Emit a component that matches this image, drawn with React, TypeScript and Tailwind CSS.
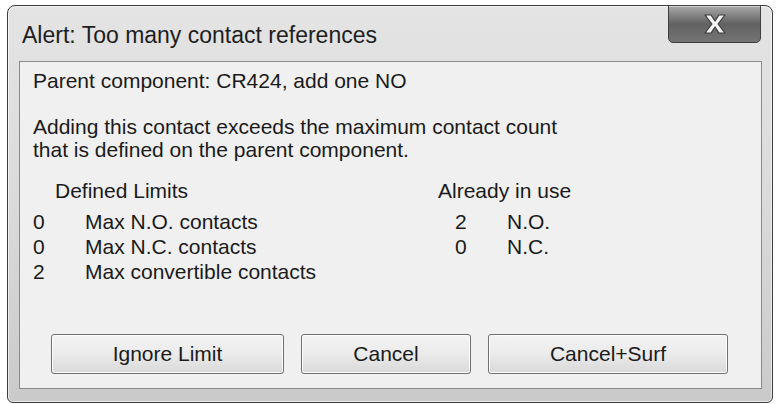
import React from "react";

const font = { fontFamily: '"Liberation Sans", Arial, sans-serif' };

function CloseButton() {
  return (
    <div className="absolute top-[-1px] right-[11px] w-[93px] h-[38px] rounded-b-[5px] border border-[#3e3e3e] bg-gradient-to-b from-[#a9a9a9] via-[#626262] to-[#747474] shadow-[inset_0_1px_0_rgba(255,255,255,0.5)] flex items-center justify-center">
      <svg width="26" height="22" viewBox="0 0 26 22">
        <path
          d="M3 2 L9 2 L13 8 L17 2 L23 2 L16 11 L23 20 L17 20 L13 14 L9 20 L3 20 L10 11 Z"
          fill="#f4f4f4"
          stroke="#3a3a3a"
          strokeWidth="1.2"
          strokeLinejoin="round"
        />
      </svg>
    </div>
  );
}

function DialogButton({ label, width }: { label: string; width: string }) {
  return (
    <button
      className={`${width} h-[40px] rounded-[3px] border border-[#707070] bg-gradient-to-b from-[#f3f3f3] via-[#ebebeb] to-[#d9d9d9] shadow-[inset_0_0_0_1px_#fcfcfc] text-[21px] text-[#1a1a1a]`}
    >
      {label}
    </button>
  );
}

export default function App() {
  const defined = [
    ["0", "Max N.O. contacts"],
    ["0", "Max N.C. contacts"],
    ["2", "Max convertible contacts"],
  ];
  const inUse = [
    ["2", "N.O."],
    ["0", "N.C."],
  ];

  return (
    <div className="w-[779px] h-[404px] bg-white pt-[5px] pl-[7px]" style={font}>
      <div className="w-[766px] h-[398px] flex flex-col rounded-t-[8px] rounded-b-[6px] border border-[#3c3c3c] bg-gradient-to-b from-[#e4e4e4] via-[#dadada] to-[#cacaca] shadow-[inset_0_0_0_1px_rgba(255,255,255,0.6)]">
        <div className="relative h-[55px] flex items-center pl-[14px] pt-[4px]">
          <span className="text-[23px] text-[#1e1e1e]">Alert: Too many contact references</span>
          <CloseButton />
        </div>

        <div className="ml-[11px] mr-[10px] h-[328px] flex flex-col border border-[#8a8a8a] bg-[#f0f0f0] text-[#1a1a1a] text-[21px]">
          <div className="pl-[13px] pt-[7px] leading-[24px]">Parent component: CR424, add one NO</div>

          <div className="pl-[13px] mt-[22px] leading-[23px]">
            <div>Adding this contact exceeds the maximum contact count</div>
            <div>that is defined on the parent component.</div>
          </div>

          <div className="pl-[13px] mt-[18px] flex">
            <div className="w-[405px]">
              <div className="pl-[22px] leading-[24px]">Defined Limits</div>
              <div className="mt-[6px] leading-[25px]">
                {defined.map(([n, label], i) => (
                  <div key={i} className="flex">
                    <span className="w-[52px]">{n}</span>
                    <span>{label}</span>
                  </div>
                ))}
              </div>
            </div>
            <div>
              <div className="leading-[24px]">Already in use</div>
              <div className="mt-[6px] pl-[17px] leading-[25px]">
                {inUse.map(([n, label], i) => (
                  <div key={i} className="flex">
                    <span className="w-[52px]">{n}</span>
                    <span>{label}</span>
                  </div>
                ))}
              </div>
            </div>
          </div>

          <div className="mt-auto pb-[14px] pl-[31px] flex gap-[17px]">
            <DialogButton label="Ignore Limit" width="w-[233px]" />
            <DialogButton label="Cancel" width="w-[170px]" />
            <DialogButton label="Cancel+Surf" width="w-[240px]" />
          </div>
        </div>
      </div>
    </div>
  );
}
